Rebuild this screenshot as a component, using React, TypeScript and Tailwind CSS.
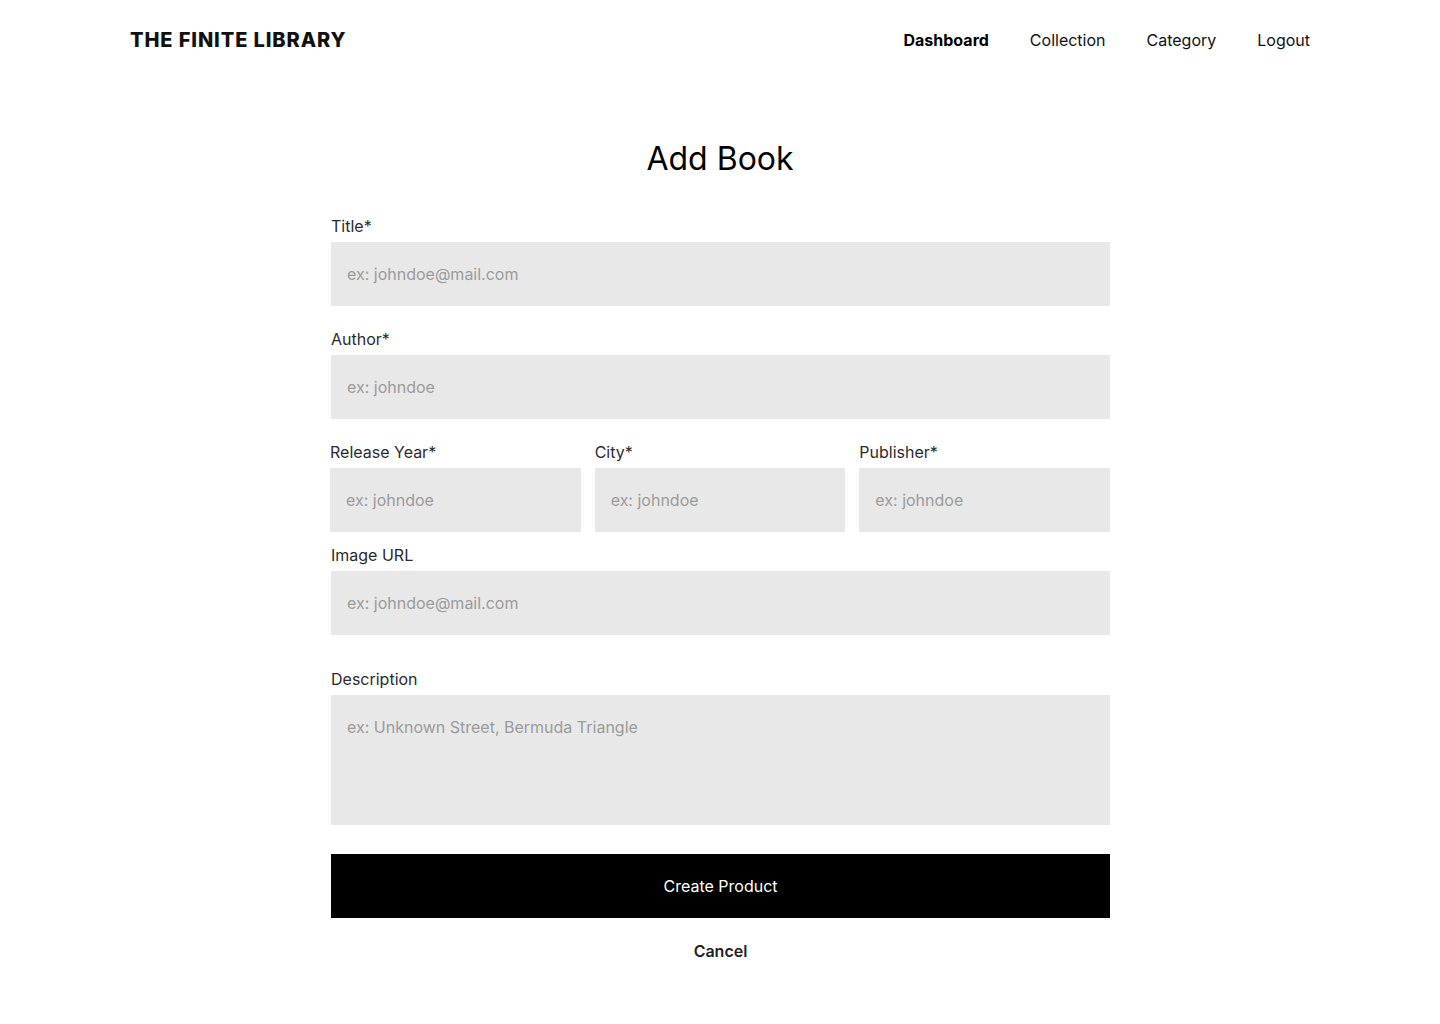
const font = { fontFamily: 'Inter, "Liberation Sans", sans-serif' };

const inputCls =
  'w-full h-16 bg-[#e8e8e8] px-4 text-base text-[#222] placeholder:text-[#9b9b9b] outline-none';

function Field({ label, placeholder, className = '' }: { label: string; placeholder: string; className?: string }) {
  return (
    <div className={`flex flex-col ${className}`}>
      <label className="text-base leading-5 text-[#2b2b2b] mb-1.5">{label}</label>
      <input className={inputCls} placeholder={placeholder} />
    </div>
  );
}

export default function App() {
  return (
    <div className="min-h-screen bg-white text-black" style={font}>
      {/* Header */}
      <header className="flex items-center justify-between px-[130px] h-20">
        <div className="text-[20px] font-extrabold tracking-[0.045em] text-[#111]">THE FINITE LIBRARY</div>
        <nav className="flex items-center gap-[41px] text-base">
          <a className="font-bold text-black">Dashboard</a>
          <a className="text-[#111]">Collection</a>
          <a className="text-[#111]">Category</a>
          <a className="text-[#111]">Logout</a>
        </nav>
      </header>

      <main className="flex flex-col items-center">
        <h1 className="mt-[57px] text-[32px] leading-[44px] font-normal">Add Book</h1>

        <form className="w-[779px] ml-px flex flex-col mt-[35px]" onSubmit={(e) => e.preventDefault()}>
          <Field label="Title*" placeholder="ex: johndoe@mail.com" />
          <Field label="Author*" placeholder="ex: johndoe" className="mt-[23px]" />

          <div className="grid grid-cols-3 gap-x-[14px] mt-[23px] -ml-px w-[780px]">
            <Field label="Release Year*" placeholder="ex: johndoe" />
            <Field label="City*" placeholder="ex: johndoe" />
            <Field label="Publisher*" placeholder="ex: johndoe" />
          </div>

          <Field label="Image URL" placeholder="ex: johndoe@mail.com" className="mt-[13px]" />

          <div className="flex flex-col mt-[34px]">
            <label className="text-base leading-5 text-[#2b2b2b] mb-1.5">Description</label>
            <textarea
              className="w-full h-[130px] bg-[#e8e8e8] px-4 pt-[22px] text-base leading-5 text-[#222] placeholder:text-[#9b9b9b] outline-none resize-none"
              placeholder="ex: Unknown Street, Bermuda Triangle"
            />
          </div>

          <button type="submit" className="mt-[29px] h-16 w-full bg-black text-white text-base">
            Create Product
          </button>

          <button type="button" className="mt-[21px] text-base font-semibold text-[#222] self-center">
            Cancel
          </button>
        </form>
      </main>
    </div>
  );
}
